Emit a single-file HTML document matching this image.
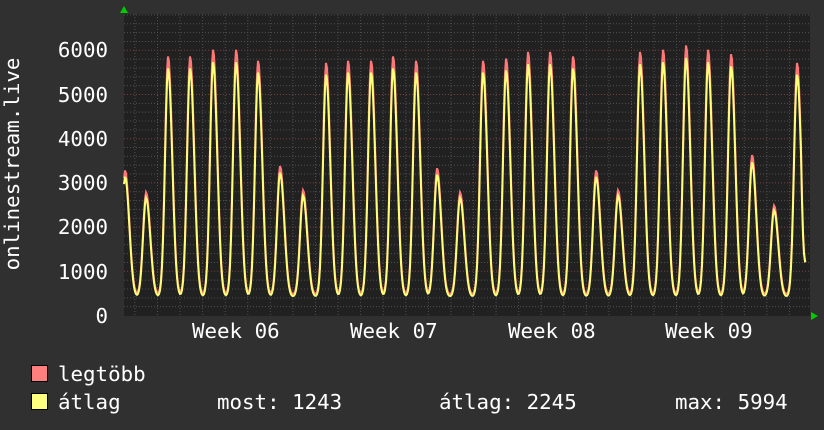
<!DOCTYPE html>
<html><head><meta charset="utf-8"><style>
html,body{margin:0;padding:0;background:#303030;}
svg{display:block}
text{font-family:"DejaVu Sans Mono","Liberation Mono",monospace;fill:#fff;font-size:20.8px}
</style></head><body>
<svg id="g" width="824" height="430" xmlns="http://www.w3.org/2000/svg">
<rect width="824" height="430" fill="#303030"/>
<rect x="124" y="14" width="686" height="302" fill="#212121"/>
<g id="grid"></g>
<g id="data"></g>
<polygon points="120,13 128,13 124,6" fill="#00cc00"/>
<polygon points="811,312 811,320 818,316" fill="#00cc00"/>
<g text-anchor="end">
<text x="108" y="57">6000</text>
<text x="108" y="102">5000</text>
<text x="108" y="146">4000</text>
<text x="108" y="190">3000</text>
<text x="108" y="234">2000</text>
<text x="108" y="279">1000</text>
<text x="108" y="323">0</text>
</g>
<text transform="translate(19,164) rotate(-90)" text-anchor="middle">onlinestream.live</text>
<text x="192" y="338">Week 06</text>
<text x="350" y="338">Week 07</text>
<text x="508" y="338">Week 08</text>
<text x="665" y="338">Week 09</text>
<rect x="31.5" y="365.5" width="16" height="16" fill="#ff7f7f" stroke="#000"/>
<rect x="31.5" y="393.5" width="16" height="16" fill="#ffff7f" stroke="#000"/>
<text x="58" y="381">legtöbb</text>
<text x="58" y="409">átlag</text>
<text x="217" y="409">most: 1243</text>
<text x="439" y="409">átlag: 2245</text>
<text x="675" y="409">max: 5994</text>
</svg>
<script>
var NS="http://www.w3.org/2000/svg";
function ln(p,x1,y1,x2,y2,c){var l=document.createElementNS(NS,"line");l.setAttribute("x1",x1);l.setAttribute("y1",y1);l.setAttribute("x2",x2);l.setAttribute("y2",y2);l.setAttribute("stroke",c);l.setAttribute("stroke-dasharray","1,2");l.setAttribute("stroke-width","1");p.appendChild(l);}
var g=document.getElementById("grid");
var Y0=315.5,S=44.2/1000;
for(var v=200;v<=6800;v+=200){var y=Y0-v*S;if(y<14)break;ln(g,124,y,810,y,v%1000==0?"#7a4040":"#505050");}
var x0=157.5-7*22.57;
for(var i=0;i<40;i++){var x=x0+i*22.57;if(x<=124||x>=810)continue;var maj=Math.abs((x-157.5)/158)%1<0.02;ln(g,x,14,x,316,maj?"#7a4040":"#505050");}
var peaks=[[125,3300],[146,2800],[168,5900],[190,5900],[213,6050],[236,6050],[258,5800],[280,3400],[303,2850],[326,5750],[348,5800],[371,5800],[393,5900],[416,5800],[437,3350],[460,2800],[483,5800],[506,5850],[528,6000],[550,6000],[573,5900],[596,3300],[618,2850],[640,6000],[663,6050],[686,6150],[708,6050],[731,5950],[752,3650],[774,2500],[797,5750]];
function val(x,k){var base=k?420:470;var v=base;for(var i=0;i<peaks.length;i++){var d=x-peaks[i][0];var p=(peaks[i][1]-base)*(k?0.95:1)*0.98;var s=d<0?3.0:3.8;v+=p*Math.exp(-d*d/(2*s*s))+p*0.08*Math.exp(-(d-5)*(d-5)/14);}return v;}
function path(k,c){var pts=[];for(var x=124;x<=806;x+=1){var v=val(x,k);if(x>=802)v=v+(1243-v)*(x-801)/5;pts.push(x+","+(Y0-v*S).toFixed(1));}var p=document.createElementNS(NS,"polyline");p.setAttribute("points",pts.join(" "));p.setAttribute("fill","none");p.setAttribute("stroke",c);p.setAttribute("stroke-width","2");document.getElementById("data").appendChild(p);}
path(0,"#ff7777");path(1,"#ffff77");
</script>
</body></html>
